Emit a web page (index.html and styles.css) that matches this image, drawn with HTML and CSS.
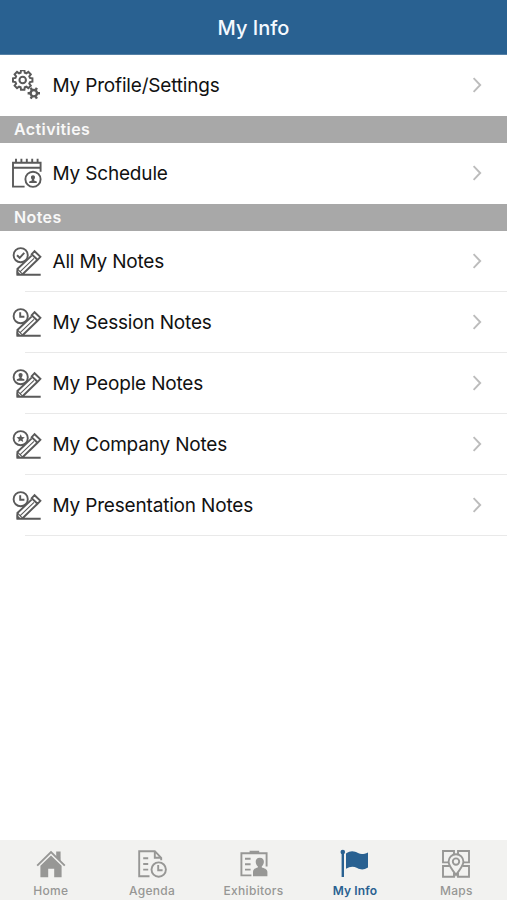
FILE: index.html
```
<!DOCTYPE html>
<html lang="en">
<head>
    <meta charset="UTF-8">
    <meta name="viewport" content="width=device-width, initial-scale=1.0">
    <title>My Info</title>
    <link rel="stylesheet" href="styles.css">
</head>
<body>
    <svg class="sprite">
        <symbol id="pencil" viewBox="0 0 30 30">
            <circle cx="8.7" cy="9.2" r="7.1"/>
            <path d="M22.6 5.2l5.8 5.6-2.9 3-5.8-5.6zM19.6 9.6L5.4 23v5.7h23.3M25 14.2L10.6 28.2"/>
            <path class="thin" d="M22 12.4L8.2 25.6M5.4 23l5.4 5.4"/>
            <path class="fill" d="M4.6 24.4l4.4 4.4H4.6z"/>
        </symbol>
        <symbol id="clock" viewBox="0 0 30 30">
            <path d="M8.2 5.2v4.6h4.2"/>
        </symbol>
        <symbol id="person" viewBox="0 0 30 30">
            <path class="fill" d="M8.6 5c2.6 0 2.4 3 1.1 4.3v1l2.7 1v1.5H4.8v-1.5l2.7-1v-1C6.2 8 6 5 8.6 5z"/>
        </symbol>
        <symbol id="chevron" viewBox="0 0 12 18">
            <path d="M2.6 2.2L9.2 9l-6.6 6.8"/>
        </symbol>
    </svg>

    <header class="header">
        <h1>My Info</h1>
    </header>

    <main class="content">
        <a class="row">
            <svg class="icon" viewBox="0 0 30 30">
                <g transform="translate(10.7 10) scale(1.05)">
                    <path d="M-1.98-6.92L-1.63-9.26H1.63L1.98-6.92L3.49-6.29L5.39-7.7L7.7-5.39L6.29-3.49L6.92-1.98L9.26-1.63V1.63L6.92 1.98L6.29 3.49L7.7 5.39L5.39 7.7L3.49 6.29L1.98 6.92L1.63 9.26H-1.63L-1.98 6.92L-3.49 6.29L-5.39 7.7L-7.7 5.39L-6.29 3.49L-6.92 1.98L-9.26 1.63V-1.63L-6.92-1.98L-6.29-3.49L-7.7-5.39L-5.39-7.7L-3.49-6.29z"/>
                    <circle r="3.1"/>
                </g>
                <g transform="translate(21.8 23.2)">
                    <circle class="thick" r="3.2"/>
                    <path class="thick" d="M1.9-3.3L3.1-5.4M3.8 0H6.2M1.9 3.3L3.1 5.4M-1.9 3.3L-3.1 5.4M-3.8 0H-6.2M-1.9-3.3L-3.1-5.4"/>
                </g>
            </svg>
            <span class="label">My Profile/Settings</span>
            <svg class="arrow"><use href="#chevron"/></svg>
        </a>

        <h2 class="section">Activities</h2>
        <a class="row">
            <svg class="icon" viewBox="0 0 30 30">
                <path d="M12.6 28.6H1V4.8h27.6v5H1M28.6 9.8v4M4 .8v4M9.4.8v4M14.8.8v4M20.2.8v4M25.6.8v4"/>
                <circle cx="21" cy="21.3" r="7.6"/>
                <use href="#person" x="12.4" y="12.2" width="30" height="30"/>
            </svg>
            <span class="label">My Schedule</span>
            <svg class="arrow"><use href="#chevron"/></svg>
        </a>

        <h2 class="section">Notes</h2>
        <a class="row line">
            <svg class="icon" viewBox="0 0 30 30">
                <use href="#pencil"/>
                <path d="M5 9.2l2.7 2.6 4.6-5"/>
            </svg>
            <span class="label">All My Notes</span>
            <svg class="arrow"><use href="#chevron"/></svg>
        </a>
        <a class="row line">
            <svg class="icon" viewBox="0 0 30 30"><use href="#pencil"/><use href="#clock"/></svg>
            <span class="label">My Session Notes</span>
            <svg class="arrow"><use href="#chevron"/></svg>
        </a>
        <a class="row line">
            <svg class="icon" viewBox="0 0 30 30"><use href="#pencil"/><use href="#person"/></svg>
            <span class="label">My People Notes</span>
            <svg class="arrow"><use href="#chevron"/></svg>
        </a>
        <a class="row line">
            <svg class="icon" viewBox="0 0 30 30">
                <use href="#pencil"/>
                <path class="fill" d="M8.7 5.2l1.2 2.7 2.9.3-2.2 2 .6 2.9-2.5-1.5-2.5 1.5.6-2.9-2.2-2 2.9-.3z"/>
            </svg>
            <span class="label">My Company Notes</span>
            <svg class="arrow"><use href="#chevron"/></svg>
        </a>
        <a class="row line">
            <svg class="icon" viewBox="0 0 30 30"><use href="#pencil"/><use href="#clock"/></svg>
            <span class="label">My Presentation Notes</span>
            <svg class="arrow"><use href="#chevron"/></svg>
        </a>
    </main>

    <nav class="tabs">
        <a class="tab">
            <svg viewBox="0 0 30 30">
                <path class="fill" d="M4.4 16.8L15 6.6l10.6 10.2v11.4h-7.4v-8.4h-6v8.4H4.4z"/>
                <path class="fill" d="M20.2 2.6h4.4v9.6l-4.4-4.2z"/>
                <path d="M1.2 16.6L15 3l13.8 13.6"/>
            </svg>
            <span>Home</span>
        </a>
        <a class="tab">
            <svg viewBox="0 0 30 30">
                <path d="M12.5 27.2H2.2V2.2h15.6l6.4 6.6v2.4M17.8 2.2v6.6h6.4M6.2 9.2h5M6.2 15h5M6.2 20.6h5"/>
                <circle cx="21.7" cy="20.6" r="7.2"/>
                <path d="M21.2 16v5.2h4.4"/>
            </svg>
            <span>Agenda</span>
        </a>
        <a class="tab">
            <svg viewBox="0 0 30 30">
                <path d="M12.4 26.4H2.4V4.2h25.2v13.2M6 9.8h5.6M6 15.2h5.6M6 20.6h5.6"/>
                <path class="fill" d="M10.6 1.8h9.6v3.2h-9.6zM20.8 8.8c5.4 0 4.8 6.2 2 8.4v1.2c2.2.8 5.6 1.4 5.6 4.4v4.4H14V23c0-3 2.6-3.8 4.8-4.6v-1.2c-2.8-2.2-3.4-8.4 2-8.4z"/>
            </svg>
            <span>Exhibitors</span>
        </a>
        <a class="tab active">
            <svg viewBox="0 0 30 30">
                <circle class="fill" cx="2.8" cy="3" r="2.3"/>
                <path class="thick" d="M2.8 3v25"/>
                <path class="fill" d="M6 4.6c5-3.8 8.4-2.4 12-.6 3.4 1.8 6 1 10-.6v15.2c-4.2 2.4-7 2.4-10.8.4-4-2-7.2-1.6-11.2.8z"/>
            </svg>
            <span>My Info</span>
        </a>
        <a class="tab">
            <svg viewBox="0 0 30 30">
                <path d="M7.6 13.4H2V2h11v3M17 5V2h11v11.4h-5.6M8.6 17H2v10.8h11v-4M17 23.8v4h11V17h-6.6"/>
                <path d="M15 26c-3.4-5.4-7.4-8.6-7.4-13.4a7.4 7.4 0 0 1 14.8 0c0 4.8-4 8-7.4 13.4z"/>
                <circle cx="15" cy="12.6" r="3.2"/>
            </svg>
            <span>Maps</span>
        </a>
    </nav>
</body>
</html>
```
FILE: styles.css
```
* {
    box-sizing: border-box;
}
body {
    margin: 0;
    height: 100vh;
    display: flex;
    flex-direction: column;
    background-color: white;
    font-family: Inter, "Liberation Sans", sans-serif;
    color: #111;
}
svg {
    fill: none;
    stroke: currentColor;
    stroke-width: 1.9;
}
.sprite {
    display: none;
}
.fill {
    fill: currentColor;
    stroke: none;
}
.thick {
    stroke-width: 2.4;
}
.thin {
    stroke-width: 1.1;
}
.header {
    height: 55px;
    flex-shrink: 0;
    display: flex;
    align-items: center;
    justify-content: center;
    background-color: #296191;
    border-bottom: 1px solid #5580a5;
}
h1 {
    margin: 2px 0 0;
    font-size: 20px;
    font-weight: 500;
    color: #f4f9ff;
}
.content {
    flex: 1;
}
.row {
    height: 61px;
    display: flex;
    align-items: center;
    padding: 0 24px 0 12px;
}
.line {
    background: linear-gradient(#e9e9e9, #e9e9e9) 25px 100% / 100% 1px no-repeat;
}
.icon {
    width: 30px;
    height: 30px;
    margin: 0 10.5px 1px 0;
    color: #5a5a5a;
}
.label {
    flex: 1;
    font-size: 19px;
    letter-spacing: -0.18px;
}
.arrow {
    width: 12px;
    height: 18px;
    margin-bottom: 1px;
    color: #bcbcbc;
}
.section {
    height: 27px;
    margin: 0;
    padding-left: 14px;
    background-color: #a8a8a8;
    color: #f8f8f8;
    font-size: 16px;
    font-weight: 600;
    letter-spacing: 0.4px;
    line-height: 27px;
}
.tabs {
    height: 60px;
    flex-shrink: 0;
    display: flex;
    background-color: #f2f2f0;
}
.tab {
    flex: 1;
    display: flex;
    flex-direction: column;
    align-items: center;
    padding-top: 9px;
    color: #979795;
    font-size: 12px;
    font-weight: 500;
    letter-spacing: 0.3px;
}
.tab svg {
    width: 30px;
    height: 30px;
    margin-bottom: 4px;
}
.tab span {
    line-height: 15px;
}
.active {
    color: #296191;
    font-weight: 600;
    letter-spacing: 0.1px;
}
```
